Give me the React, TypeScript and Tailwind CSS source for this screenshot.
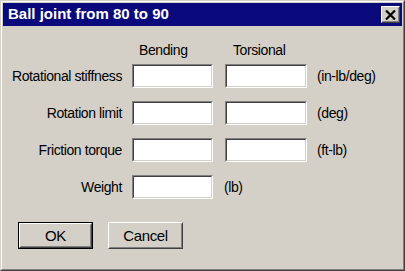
import type { ReactNode } from 'react'

const ROWS: { label: string; unit: string; two: boolean }[] = [
  { label: 'Rotational stiffness', unit: '(in-lb/deg)', two: true },
  { label: 'Rotation limit', unit: '(deg)', two: true },
  { label: 'Friction torque', unit: '(ft-lb)', two: true },
  { label: 'Weight', unit: '(lb)', two: false },
]

function Field({ w }: { w: string }) {
  return (
    <div className={`${w} h-[24px] border border-t-[#808080] border-l-[#808080] border-b-white border-r-white`}>
      <div className="h-full w-full border border-t-[#404040] border-l-[#404040] border-b-[#d4d0c8] border-r-[#d4d0c8] bg-white" />
    </div>
  )
}

function Button({ children, isDefault }: { children: ReactNode; isDefault?: boolean }) {
  const face = (
    <div className="h-full w-full border border-t-white border-l-white border-b-[#404040] border-r-[#404040]">
      <div className="flex h-full w-full items-center justify-center border border-t-[#d4d0c8] border-l-[#d4d0c8] border-b-[#808080] border-r-[#808080] text-[15px]">
        {children}
      </div>
    </div>
  )
  return isDefault ? (
    <div className="h-[27px] w-[75px] border border-black">{face}</div>
  ) : (
    <div className="h-[27px] w-[75px]">{face}</div>
  )
}

export default function App() {
  return (
    <div
      className="h-[271px] w-[405px] border border-t-[#d4d0c8] border-l-[#d4d0c8] border-b-[#404040] border-r-[#404040] bg-[#d4d0c8] text-[14px] tracking-[-0.4px] text-black"
      style={{ fontFamily: '"Liberation Sans", Arial, sans-serif' }}
    >
      <div className="h-full w-full border border-t-white border-l-white border-b-[#808080] border-r-[#808080] p-px">
        {/* title bar */}
        <div className="flex h-[23px] items-center justify-between bg-[#0a0a7d] pl-[5px] pr-[2px]">
          <span className="text-[15px] font-bold tracking-normal text-white">Ball joint from 80 to 90</span>
          <div className="h-[17px] w-[19px] border border-t-white border-l-white border-b-[#404040] border-r-[#404040] bg-[#d4d0c8]">
            <div className="flex h-full w-full items-center justify-center border border-t-[#d4d0c8] border-l-[#d4d0c8] border-b-[#808080] border-r-[#808080]">
              <svg width="11" height="10" viewBox="0 0 11 10">
                <path d="M1 0.5 L10 9.5 M10 0.5 L1 9.5" stroke="black" strokeWidth="2.2" />
              </svg>
            </div>
          </div>
        </div>

        {/* headers */}
        <div className="mt-[16px] flex h-[16px] items-center leading-none">
          <div className="w-[119px]" />
          <div className="ml-[10px] w-[81px] pl-[7px]">Bending</div>
          <div className="ml-[12px] w-[82px] pl-[8px]">Torsional</div>
        </div>

        {/* rows */}
        <div className="mt-[6px] flex flex-col gap-[13px]">
          {ROWS.map((r) => (
            <div key={r.label} className="flex items-center leading-none">
              <div className="w-[119px] text-right">{r.label}</div>
              <div className="ml-[10px]">
                <Field w="w-[81px]" />
              </div>
              {r.two ? (
                <>
                  <div className="ml-[12px]">
                    <Field w="w-[82px]" />
                  </div>
                  <div className="ml-[10px]">{r.unit}</div>
                </>
              ) : (
                <div className="ml-[11px]">{r.unit}</div>
              )}
            </div>
          ))}
        </div>

        {/* buttons */}
        <div className="mt-[23px] flex gap-[15px] pl-[15px] leading-none">
          <Button isDefault>OK</Button>
          <Button>Cancel</Button>
        </div>
      </div>
    </div>
  )
}
